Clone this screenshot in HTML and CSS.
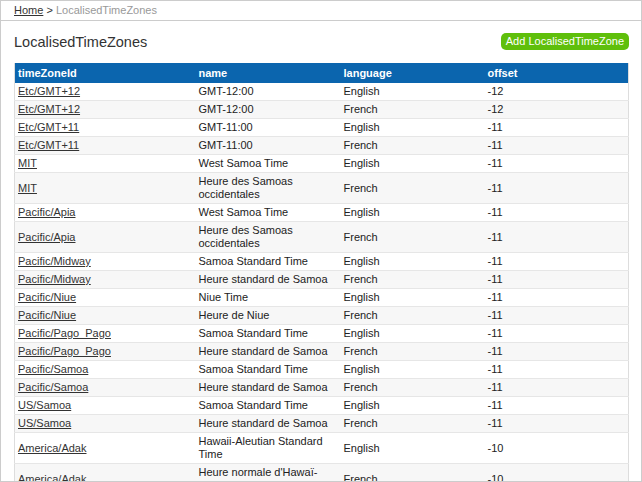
FILE: index.html
```html
<!DOCTYPE html>
<html lang="en">
<head>
    <meta charset="UTF-8">
    <title>LocalisedTimeZones</title>
    <link rel="stylesheet" href="styles.css">
</head>
<body>
    <div class="page">
        <div class="crumbs">
            <a href="#">Home</a> &gt; <span class="current">LocalisedTimeZones</span>
        </div>

        <div class="content">
            <div class="heading">
                <h1>LocalisedTimeZones</h1>
                <a class="btn-add" href="#">Add LocalisedTimeZone</a>
            </div>

            <table class="list">
                <colgroup>
                    <col class="c-id">
                    <col class="c-name">
                    <col class="c-lang">
                    <col>
                </colgroup>
                <thead>
                    <tr>
                        <th>timeZoneId</th>
                        <th>name</th>
                        <th>language</th>
                        <th>offset</th>
                    </tr>
                </thead>
                <tbody>
                    <tr><td><a href="#">Etc/GMT+12</a></td><td>GMT-12:00</td><td>English</td><td>-12</td></tr>
                    <tr><td><a href="#">Etc/GMT+12</a></td><td>GMT-12:00</td><td>French</td><td>-12</td></tr>
                    <tr><td><a href="#">Etc/GMT+11</a></td><td>GMT-11:00</td><td>English</td><td>-11</td></tr>
                    <tr><td><a href="#">Etc/GMT+11</a></td><td>GMT-11:00</td><td>French</td><td>-11</td></tr>
                    <tr><td><a href="#">MIT</a></td><td>West Samoa Time</td><td>English</td><td>-11</td></tr>
                    <tr><td><a href="#">MIT</a></td><td>Heure des Samoas occidentales</td><td>French</td><td>-11</td></tr>
                    <tr><td><a href="#">Pacific/Apia</a></td><td>West Samoa Time</td><td>English</td><td>-11</td></tr>
                    <tr><td><a href="#">Pacific/Apia</a></td><td>Heure des Samoas occidentales</td><td>French</td><td>-11</td></tr>
                    <tr><td><a href="#">Pacific/Midway</a></td><td>Samoa Standard Time</td><td>English</td><td>-11</td></tr>
                    <tr><td><a href="#">Pacific/Midway</a></td><td>Heure standard de Samoa</td><td>French</td><td>-11</td></tr>
                    <tr><td><a href="#">Pacific/Niue</a></td><td>Niue Time</td><td>English</td><td>-11</td></tr>
                    <tr><td><a href="#">Pacific/Niue</a></td><td>Heure de Niue</td><td>French</td><td>-11</td></tr>
                    <tr><td><a href="#">Pacific/Pago_Pago</a></td><td>Samoa Standard Time</td><td>English</td><td>-11</td></tr>
                    <tr><td><a href="#">Pacific/Pago_Pago</a></td><td>Heure standard de Samoa</td><td>French</td><td>-11</td></tr>
                    <tr><td><a href="#">Pacific/Samoa</a></td><td>Samoa Standard Time</td><td>English</td><td>-11</td></tr>
                    <tr><td><a href="#">Pacific/Samoa</a></td><td>Heure standard de Samoa</td><td>French</td><td>-11</td></tr>
                    <tr><td><a href="#">US/Samoa</a></td><td>Samoa Standard Time</td><td>English</td><td>-11</td></tr>
                    <tr><td><a href="#">US/Samoa</a></td><td>Heure standard de Samoa</td><td>French</td><td>-11</td></tr>
                    <tr><td><a href="#">America/Adak</a></td><td>Hawaii-Aleutian Standard Time</td><td>English</td><td>-10</td></tr>
                    <tr><td><a href="#">America/Adak</a></td><td>Heure normale d'Hawaï-Aléoutiennes</td><td>French</td><td>-10</td></tr>
                </tbody>
            </table>
        </div>
    </div>
</body>
</html>
```

FILE: styles.css
```css
html, body {
    margin: 0;
    padding: 0;
}
body {
    font-family: "Liberation Sans", Arial, sans-serif;
    font-size: 11px;
    color: #222;
    background: #fff;
}
a {
    color: #333;
}
.page {
    box-sizing: border-box;
    width: 642px;
    height: 482px;
    border: 1px solid #ccc;
    overflow: hidden;
}
.crumbs {
    height: 19px;
    line-height: 19px;
    padding: 0 13px;
    border-bottom: 1px solid #ccc;
    color: #333;
}
.crumbs .current {
    color: #999;
}
.content {
    padding: 12px 12px 0 13px;
}
.heading {
    display: flex;
    justify-content: space-between;
    align-items: flex-start;
    margin-bottom: 12px;
}
h1 {
    margin: 1px 0 0;
    font-size: 14.5px;
    font-weight: normal;
    line-height: 17px;
    color: #333;
}
.btn-add {
    display: block;
    height: 17px;
    line-height: 17px;
    padding: 0 5px;
    border-radius: 5px;
    background-color: #5fbf0b;
    color: #fff;
    text-decoration: none;
}
.list {
    width: 615px;
    table-layout: fixed;
    border-collapse: collapse;
    border-left: 1px solid #ddd;
    border-right: 1px solid #ddd;
}
.c-id {
    width: 181px;
}
.c-name {
    width: 145px;
}
.c-lang {
    width: 144px;
}
.list th {
    background-color: #0b65ae;
    color: #fff;
    font-weight: bold;
    text-align: left;
    line-height: 14px;
    padding: 3px 3px;
}
.list td {
    line-height: 13px;
    padding: 2px 3px;
    border-bottom: 1px solid #e6e6e6;
    vertical-align: middle;
}
.list tbody tr:nth-child(even) {
    background-color: #f7f7f7;
}
```
